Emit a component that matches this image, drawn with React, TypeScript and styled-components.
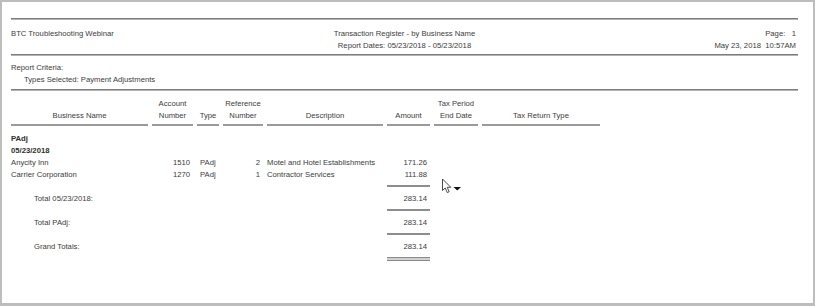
import styled, { createGlobalStyle } from 'styled-components';

const GlobalStyle = createGlobalStyle`
  html, body {
    margin: 0;
    padding: 0;
    background: #ffffff;
  }
  body {
    font-family: 'Liberation Sans', Arial, sans-serif;
  }
`;

type Row = {
  name: string;
  account: string;
  type: string;
  reference: string;
  description: string;
  amount: string;
};

const rows: Row[] = [
  {
    name: 'Anycity Inn',
    account: '1510',
    type: 'PAdj',
    reference: '2',
    description: 'Motel and Hotel Establishments',
    amount: '171.26',
  },
  {
    name: 'Carrier Corporation',
    account: '1270',
    type: 'PAdj',
    reference: '1',
    description: 'Contractor Services',
    amount: '111.88',
  },
];

const totals = [
  { label: 'Total 05/23/2018:', amount: '283.14', rule: 'single' as const },
  { label: 'Total PAdj:', amount: '283.14', rule: 'single' as const },
  { label: 'Grand Totals:', amount: '283.14', rule: 'double' as const },
];

const COLUMNS = '137px 41px 22px 40px 116px 43px 44px 118px';

export default function App() {
  return (
    <>
      <GlobalStyle />
      <Frame>
        <Report>
          <Rule />
          <PageHeader>
            <HeaderLeft>BTC Troubleshooting Webinar</HeaderLeft>
            <HeaderCenter>
              <Line>Transaction Register - by Business Name</Line>
              <Line>Report Dates: 05/23/2018 - 05/23/2018</Line>
            </HeaderCenter>
            <HeaderRight>
              <Line>
                Page:&nbsp;&nbsp;&nbsp;1
              </Line>
              <Line>May 23, 2018&nbsp;&nbsp;10:57AM</Line>
            </HeaderRight>
          </PageHeader>
          <Rule $gap={2} />
          <Criteria>
            <Line>Report Criteria:</Line>
            <Line $indent={13}>Types Selected: Payment Adjustments</Line>
          </Criteria>
          <Rule $gap={3} />

          <ColumnHeads>
            <HeadCell>Business Name</HeadCell>
            <HeadCell>
              Account
              <br />
              Number
            </HeadCell>
            <HeadCell>Type</HeadCell>
            <HeadCell>
              Reference
              <br />
              Number
            </HeadCell>
            <HeadCell>Description</HeadCell>
            <HeadCell>Amount</HeadCell>
            <HeadCell>
              Tax Period
              <br />
              End Date
            </HeadCell>
            <HeadCell>Tax Return Type</HeadCell>
          </ColumnHeads>

          <Body>
            <GroupTitle>PAdj</GroupTitle>
            <GroupTitle>05/23/2018</GroupTitle>
            {rows.map((r) => (
              <DataRow key={r.name}>
                <Cell>{r.name}</Cell>
                <Cell $align="right">{r.account}</Cell>
                <Cell $pad={3}>{r.type}</Cell>
                <Cell $align="right">{r.reference}</Cell>
                <Cell>{r.description}</Cell>
                <Cell $align="right">{r.amount}</Cell>
              </DataRow>
            ))}
            <AmountRuleRow>
              <AmountRule />
            </AmountRuleRow>
            {totals.map((t) => (
              <TotalBlock key={t.label}>
                <DataRow>
                  <Cell $pad={23}>{t.label}</Cell>
                  <Cell />
                  <Cell />
                  <Cell />
                  <Cell />
                  <Cell $align="right">{t.amount}</Cell>
                </DataRow>
                <AmountRuleRow>
                  {t.rule === 'double' ? <DoubleRule /> : <AmountRule />}
                </AmountRuleRow>
              </TotalBlock>
            ))}
          </Body>
        </Report>
        <Cursor aria-hidden>
          <svg width="22" height="16" viewBox="0 0 22 16">
            <path
              d="M1.5 1 L1.5 12.5 L4.2 10 L6.3 14.6 L8.2 13.7 L6.2 9.3 L9.8 9.3 Z"
              fill="#ffffff"
              stroke="#4a4a4a"
              strokeWidth="1"
              strokeLinejoin="round"
            />
            <path d="M12.5 9 L20 9 L16.25 12.5 Z" fill="#111111" />
          </svg>
        </Cursor>
      </Frame>
    </>
  );
}

const Frame = styled.div`
  position: relative;
  box-sizing: border-box;
  width: 815px;
  height: 306px;
  border-style: solid;
  border-color: #bdbdbd;
  border-width: 2px 2px 3px 2px;
  background: #ffffff;
  overflow: hidden;
`;

const Report = styled.div`
  display: flex;
  flex-direction: column;
  padding: 16px 15px 0 9px;
  font-size: 7.7px;
  line-height: 12px;
  color: #3c3c3c;
`;

const Rule = styled.div<{ $gap?: number }>`
  margin-top: ${(p) => p.$gap ?? 0}px;
  height: 2px;
  border-top: 1px solid #7c7c7c;
  box-sizing: border-box;
  background: #b4b4b4;
`;

const PageHeader = styled.div`
  display: grid;
  grid-template-columns: 1fr auto 1fr;
  margin-top: 8px;
`;

const HeaderLeft = styled.div`
  align-self: start;
`;

const HeaderCenter = styled.div`
  display: flex;
  flex-direction: column;
  align-items: center;
`;

const HeaderRight = styled.div`
  display: flex;
  flex-direction: column;
  align-items: flex-end;
  padding-right: 2px;
`;

const Line = styled.div<{ $indent?: number }>`
  padding-left: ${(p) => p.$indent ?? 0}px;
  white-space: nowrap;
`;

const Criteria = styled.div`
  margin-top: 6px;
`;

const ColumnHeads = styled.div`
  display: grid;
  grid-template-columns: ${COLUMNS};
  column-gap: 4px;
  margin-top: 7px;
  align-items: end;
`;

const HeadCell = styled.div`
  text-align: center;
  padding-bottom: 2px;
  border-bottom: 2px solid #9a9a9a;
  white-space: nowrap;
`;

const Body = styled.div`
  display: flex;
  flex-direction: column;
  margin-top: 7px;
`;

const GroupTitle = styled.div`
  font-weight: bold;
  color: #2e2e2e;
`;

const DataRow = styled.div`
  display: grid;
  grid-template-columns: ${COLUMNS};
  column-gap: 4px;
`;

const Cell = styled.div<{ $align?: 'left' | 'right'; $pad?: number }>`
  text-align: ${(p) => p.$align ?? 'left'};
  padding-left: ${(p) => p.$pad ?? 0}px;
  padding-right: ${(p) => (p.$align === 'right' ? 3 : 0)}px;
  white-space: nowrap;
`;

const TotalBlock = styled.div`
  display: flex;
  flex-direction: column;
  margin-top: 6px;
`;

const AmountRuleRow = styled.div`
  display: grid;
  grid-template-columns: ${COLUMNS};
  column-gap: 4px;
  margin-top: 4px;
  & > * {
    grid-column: 6;
  }
`;

const AmountRule = styled.div`
  height: 2px;
  background: #8e8e8e;
`;

const DoubleRule = styled.div`
  height: 4px;
  border-top: 1px solid #8a8a8a;
  border-bottom: 1px solid #8a8a8a;
  box-sizing: border-box;
  background: #d0d0d0;
`;

const Cursor = styled.div`
  position: absolute;
  left: 439px;
  top: 176px;
  line-height: 0;
`;
